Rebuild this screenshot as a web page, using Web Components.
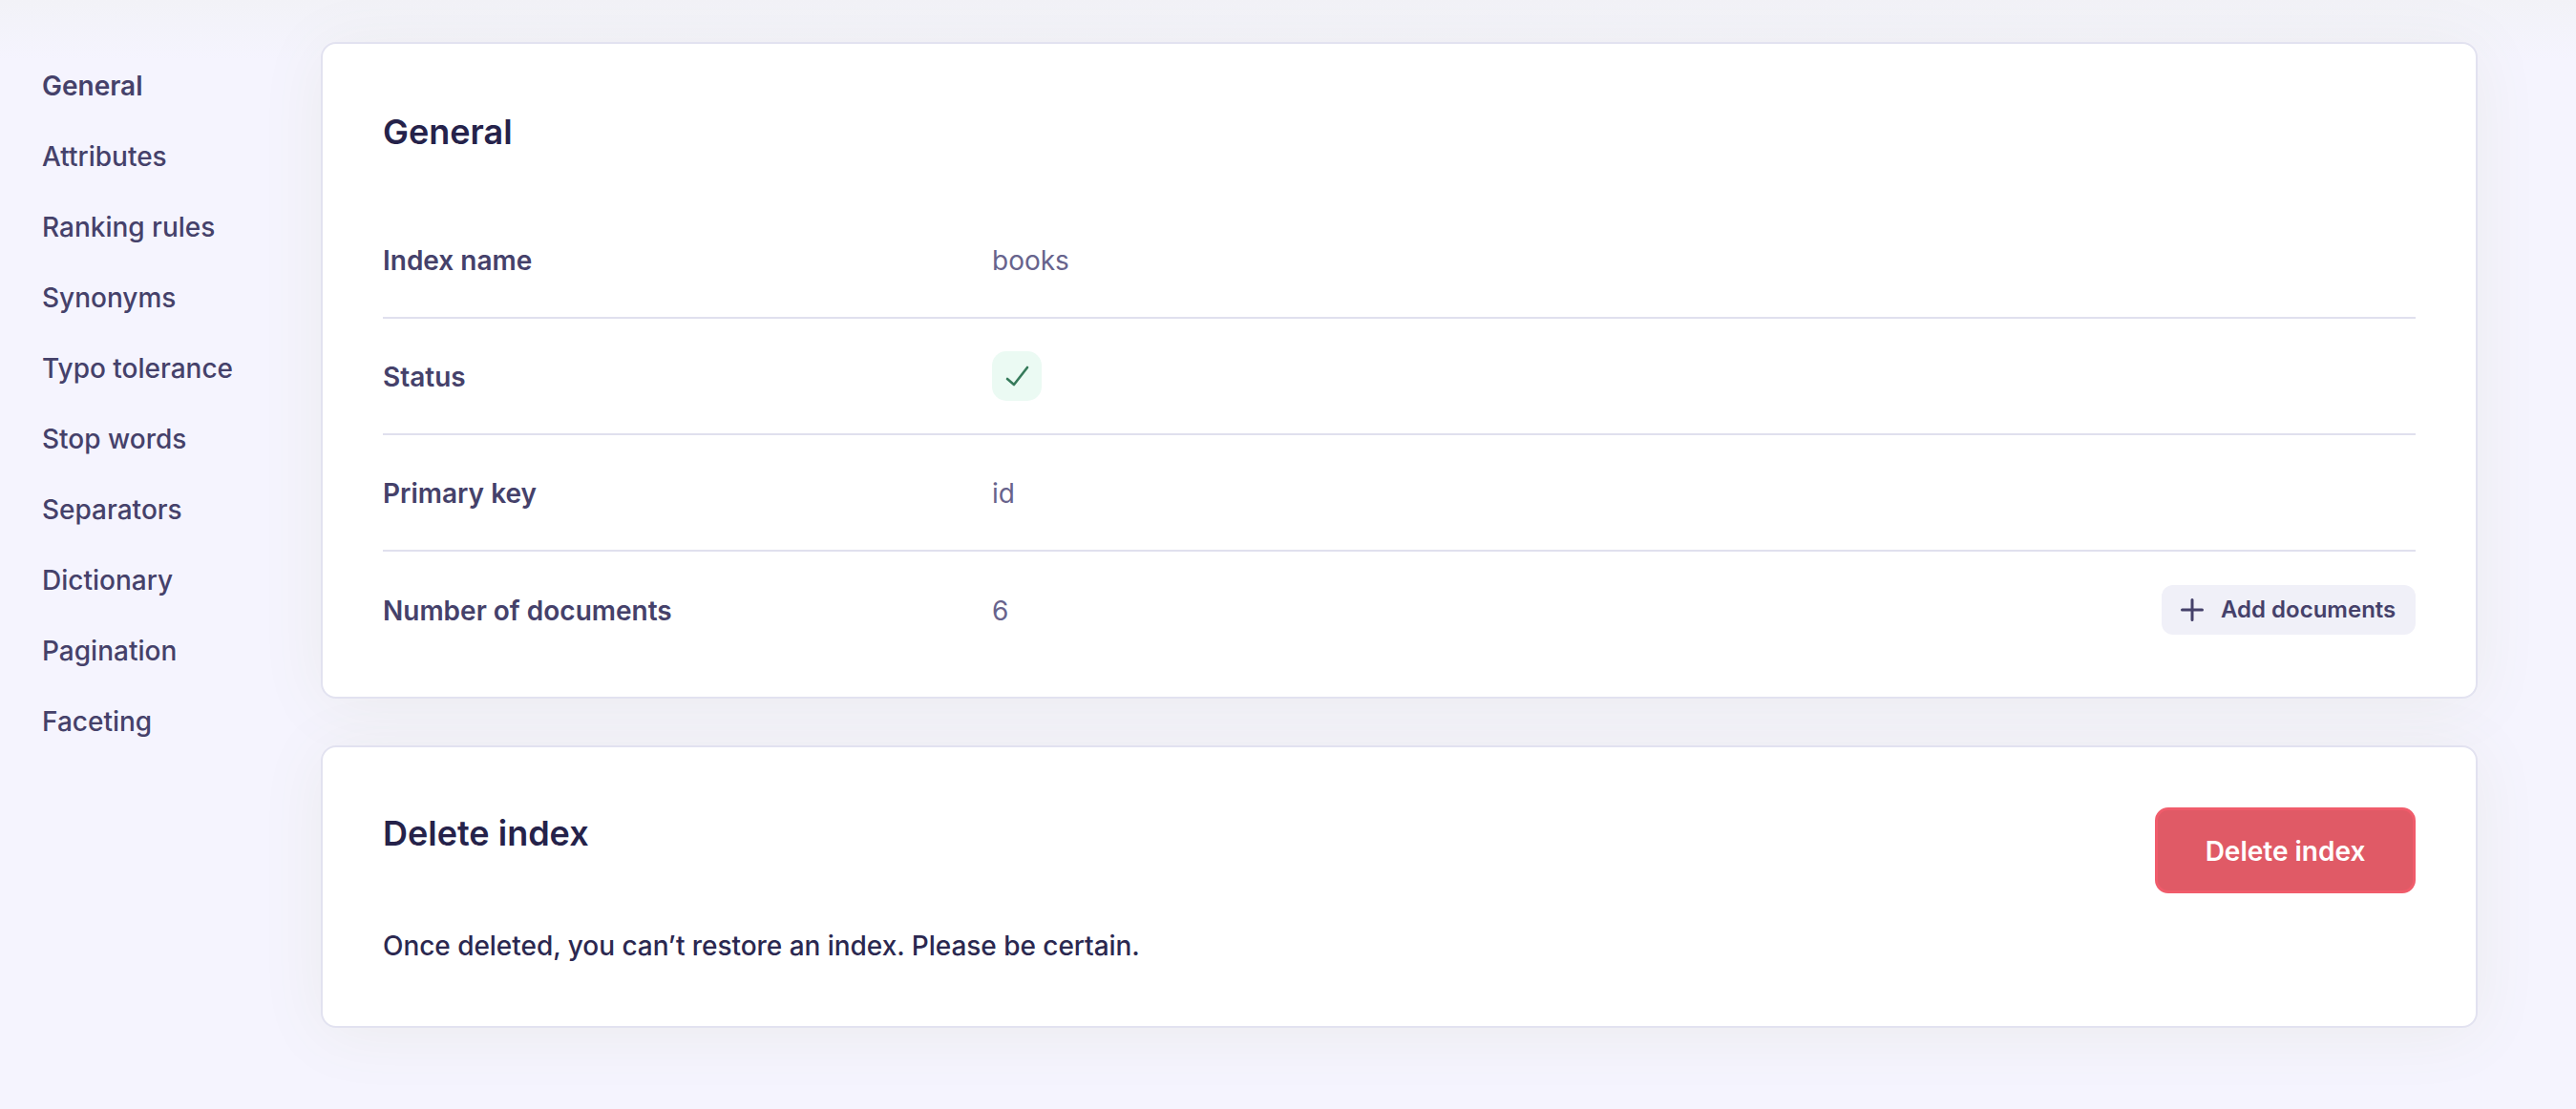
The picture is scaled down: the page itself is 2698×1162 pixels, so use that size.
<!DOCTYPE html>
<html>
<head>
<meta charset="utf-8">
<title>Index settings</title>
<style>
    html, body { margin: 0; height: 100%; background: #f5f4fe; }
    body { font-family: Inter, "Liberation Sans", sans-serif; color: #25224a; overflow: hidden; }
</style>
</head>
<body>

<template id="settings-page-template">
    <style>
        :host { display: grid; grid-template-columns: 336px 1fr; height: 1162px; background: linear-gradient(#f2f2f7, #f3f3fa 24px, #f5f4fe 64px); }
        main { display: flex; flex-direction: column; gap: 49px; padding: 44px 103px 0 0; }
    </style>
    <slot name="nav"></slot>
    <main><slot></slot></main>
</template>

<template id="side-nav-template">
    <style>
        :host { display: flex; flex-direction: column; padding: 70px 0 0 44px; }
    </style>
    <slot></slot>
</template>

<template id="nav-link-template">
    <style>
        :host { display: block; height: 74px; line-height: 40px; font-size: 28px; font-weight: 500; color: #45416a; white-space: nowrap; }
        :host([active]) { font-weight: 600; }
    </style>
    <slot></slot>
</template>

<template id="panel-card-template">
    <style>
        :host {
            display: block;
            box-sizing: border-box;
            background: #fff;
            border: 2px solid #e2e2f0;
            border-radius: 16px;
            box-shadow: 0 6px 70px rgba(120, 130, 20, 0.07);
            padding: var(--panel-padding, 63px);
        }
    </style>
    <slot></slot>
</template>

<template id="panel-title-template">
    <style>
        :host { display: block; font-size: 36px; line-height: 52px; font-weight: 600; color: #25224a; }
    </style>
    <slot></slot>
</template>

<template id="info-row-template">
    <style>
        :host { display: grid; grid-template-columns: 638px 1fr auto; align-items: center; height: 120px; border-bottom: 2px solid #e0e0ee; }
        :host([last]) { border-bottom: 0; height: 121px; }
        .label { padding-top: 2px; font-size: 28px; font-weight: 600; color: #45416a; }
        .value { padding-top: 2px; font-size: 28px; font-weight: 400; color: #67638c; }
    </style>
    <div class="label"><slot name="label"></slot></div>
    <div class="value"><slot></slot></div>
    <slot name="action"></slot>
</template>

<template id="status-badge-template">
    <style>
        :host { display: block; width: 52px; height: 52px; margin-top: -2px; border-radius: 15px; background: #ebfaf3; }
        svg { width: 52px; height: 52px; display: block; }
    </style>
    <svg viewBox="0 0 52 52" fill="none" stroke="#357a5a" stroke-width="2.6" stroke-linecap="round" stroke-linejoin="round">
        <path d="M16 29 L23 35 L37 17"></path>
    </svg>
</template>

<template id="add-button-template">
    <style>
        :host { display: inline-flex; align-items: center; gap: 18px; width: 266px; height: 52px; padding: 0 0 0 20px; box-sizing: border-box; border-radius: 12px; background: #f0f0f8; font-size: 24px; font-weight: 600; color: #45416a; white-space: nowrap; }
        svg { width: 24px; height: 24px; display: block; }
    </style>
    <svg viewBox="0 0 24 24" fill="none" stroke="#45416a" stroke-width="3" stroke-linecap="round">
        <path d="M12 1.5 V22.5 M1.5 12 H22.5"></path>
    </svg>
    <slot></slot>
</template>

<template id="danger-button-template">
    <style>
        :host { display: inline-flex; align-items: center; justify-content: center; width: 273px; height: 90px; box-sizing: border-box; padding-top: 2px; border: 3px solid #f05c6b; border-radius: 14px; background: #e05a66; font-size: 28px; font-weight: 600; color: #fff; white-space: nowrap; }
    </style>
    <slot></slot>
</template>

<template id="panel-head-template">
    <style>
        :host { display: flex; justify-content: space-between; align-items: flex-start; }
    </style>
    <slot></slot>
</template>

<template id="panel-text-template">
    <style>
        :host { display: block; font-size: 28px; line-height: 40px; font-weight: 500; letter-spacing: -0.04px; color: #2b2850; }
    </style>
    <slot></slot>
</template>

<script>
    class TemplateElement extends HTMLElement {
        constructor() {
            super();
            const template = document.getElementById(this.constructor.templateId);
            this.attachShadow({mode: 'open'});
            this.shadowRoot.appendChild(template.content.cloneNode(true));
        }
    }

    const define = (name) => {
        customElements.define(name, class extends TemplateElement {
            static get templateId() {
                return name + '-template';
            }
        });
    };

    ['settings-page', 'side-nav', 'nav-link', 'panel-card', 'panel-title', 'panel-head', 'panel-text',
     'info-row', 'status-badge', 'add-button', 'danger-button'].forEach(define);
</script>

<settings-page>
    <side-nav slot="nav">
        <nav-link active>General</nav-link>
        <nav-link>Attributes</nav-link>
        <nav-link>Ranking rules</nav-link>
        <nav-link>Synonyms</nav-link>
        <nav-link>Typo tolerance</nav-link>
        <nav-link>Stop words</nav-link>
        <nav-link>Separators</nav-link>
        <nav-link>Dictionary</nav-link>
        <nav-link>Pagination</nav-link>
        <nav-link>Faceting</nav-link>
    </side-nav>

    <panel-card style="--panel-padding: 66px 63px 30px; height: 688px">
        <panel-title style="margin-bottom: 48px">General</panel-title>
        <info-row><span slot="label">Index name</span>books</info-row>
        <info-row><span slot="label">Status</span><status-badge></status-badge></info-row>
        <info-row><span slot="label">Primary key</span>id</info-row>
        <info-row last><span slot="label">Number of documents</span>6<add-button slot="action">Add documents</add-button></info-row>
    </panel-card>

    <panel-card style="height: 296px">
        <panel-head>
            <panel-title style="margin-top: 1px">Delete index</panel-title>
            <danger-button>Delete index</danger-button>
        </panel-head>
        <panel-text style="margin-top: 35px">Once deleted, you can’t restore an index. Please be certain.</panel-text>
    </panel-card>
</settings-page>

</body>
</html>
